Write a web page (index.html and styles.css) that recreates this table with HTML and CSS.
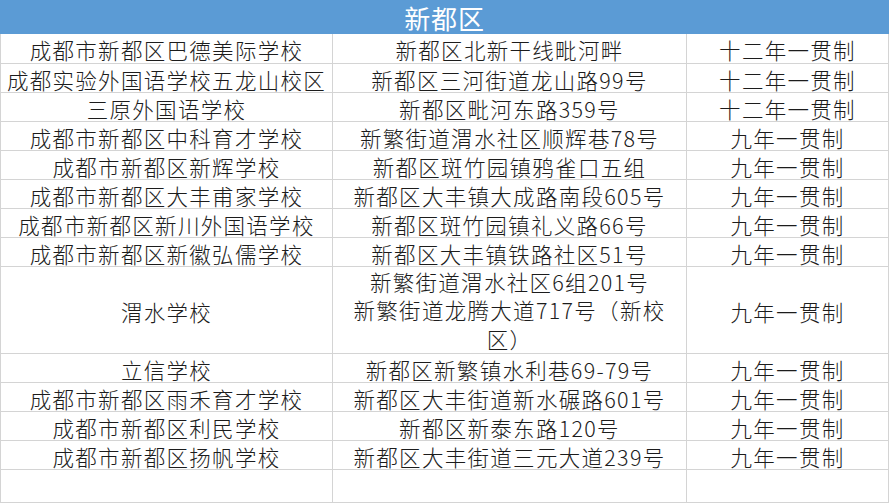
FILE: index.html
```html
<!DOCTYPE html>
<html lang="zh-CN">
<head>
<meta charset="utf-8">
<title>新都区</title>
<link rel="stylesheet" href="styles.css">
</head>
<body>
<div class="sheet">
  <div class="title">新都区</div>
  <div class="grid">
    <div class="cell">成都市新都区巴德美际学校</div><div class="cell">新都区北新干线毗河畔</div><div class="cell">十二年一贯制</div>
    <div class="cell">成都实验外国语学校五龙山校区</div><div class="cell">新都区三河街道龙山路99号</div><div class="cell">十二年一贯制</div>
    <div class="cell">三原外国语学校</div><div class="cell">新都区毗河东路359号</div><div class="cell">十二年一贯制</div>
    <div class="cell">成都市新都区中科育才学校</div><div class="cell">新繁街道渭水社区顺辉巷78号</div><div class="cell">九年一贯制</div>
    <div class="cell">成都市新都区新辉学校</div><div class="cell">新都区斑竹园镇鸦雀口五组</div><div class="cell">九年一贯制</div>
    <div class="cell">成都市新都区大丰甫家学校</div><div class="cell">新都区大丰镇大成路南段605号</div><div class="cell">九年一贯制</div>
    <div class="cell">成都市新都区新川外国语学校</div><div class="cell">新都区斑竹园镇礼义路66号</div><div class="cell">九年一贯制</div>
    <div class="cell">成都市新都区新徽弘儒学校</div><div class="cell">新都区大丰镇铁路社区51号</div><div class="cell">九年一贯制</div>
    <div class="cell tall">渭水学校</div><div class="cell tall multi">新繁街道渭水社区6组201号<br>新繁街道龙腾大道717号（新校<br>区）</div><div class="cell tall">九年一贯制</div>
    <div class="cell">立信学校</div><div class="cell">新都区新繁镇水利巷69-79号</div><div class="cell">九年一贯制</div>
    <div class="cell">成都市新都区雨禾育才学校</div><div class="cell">新都区大丰街道新水碾路601号</div><div class="cell">九年一贯制</div>
    <div class="cell">成都市新都区利民学校</div><div class="cell">新都区新泰东路120号</div><div class="cell">九年一贯制</div>
    <div class="cell">成都市新都区扬帆学校</div><div class="cell">新都区大丰街道三元大道239号</div><div class="cell">九年一贯制</div>
    <div class="cell"></div><div class="cell"></div><div class="cell"></div>
  </div>
</div>
</body>
</html>
```
FILE: styles.css
```css
* { box-sizing: border-box; }
html, body {
  margin: 0;
  padding: 0;
  background: #ffffff;
}
body {
  font-family: "Noto Sans CJK SC", "Noto Sans", sans-serif;
  color: #1c1c1c;
}
.sheet {
  width: 889px;
}
.title {
  height: 34px;
  background: #5b9bd5;
  color: #ffffff;
  font-size: 26px;
  line-height: 36px;
  letter-spacing: 0.8px;
  text-align: center;
  font-weight: 400;
}
.grid {
  display: grid;
  grid-template-columns: 331px 353px 201px;
  grid-template-rows: 29px repeat(14, 28px) 32px;
  gap: 1px;
  background: #d4d4d4;
  padding: 0 1px 1px 1px;
}
.cell {
  background: #ffffff;
  font-size: 21.5px;
  font-weight: 300;
  letter-spacing: 1.3px;
  line-height: 24px;
  padding-top: 3px;
  text-align: center;
  white-space: nowrap;
  display: flex;
  align-items: center;
  justify-content: center;
}
.tall {
  grid-row: span 3;
}
.multi {
  display: block;
  line-height: 28.3px;
  padding-top: 1px;
}
```
